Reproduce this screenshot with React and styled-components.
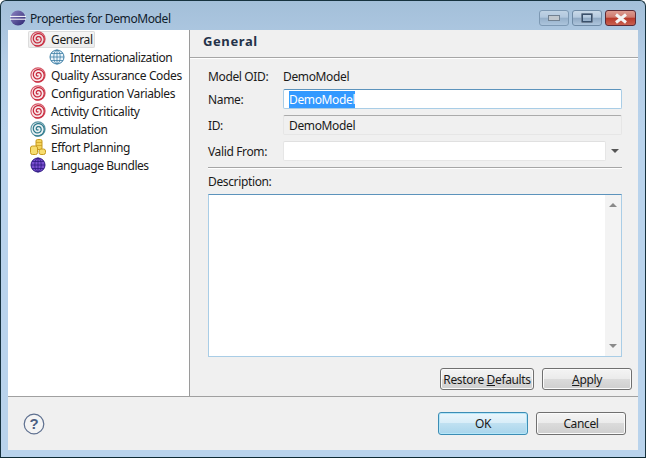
import styled, { createGlobalStyle } from "styled-components"

const Global = createGlobalStyle`
  html, body { margin: 0; padding: 0; background: #fff; }
  * { box-sizing: border-box; }
`

const Window = styled.div`
  width: 646px;
  height: 458px;
  display: flex;
  flex-direction: column;
  padding: 0 7px 7px;
  border: 1px solid #16323f;
  border-bottom-color: #0e2a33;
  border-radius: 6px 6px 0 0;
  background: linear-gradient(180deg, #a3bfd9 0, #b4cde6 60px, #b9d3ec 130px, #b9d3ec 100%);
  font-family: "Noto Sans", "Open Sans", sans-serif;
  font-size: 12px;
  color: #1a1a1a;
`

const TitleBar = styled.div`
  height: 29px;
  flex: none;
  display: flex;
  align-items: center;
  padding: 5px 2px 0 2px;
  gap: 4px;
`

const TitleText = styled.div`
  flex: 1;
  color: #10202c;
  letter-spacing: -0.4px;
`

const Controls = styled.div`
  display: flex;
  gap: 3px;
`

const Control = styled.div`
  width: ${(p) => (p.$close ? 31 : 30)}px;
  height: 16px;
  border: 1px solid ${(p) => (p.$close ? "#5c2a35" : "#6f8ba6")};
  border-radius: 3px;
  display: flex;
  align-items: center;
  justify-content: center;
  opacity: ${(p) => (p.$dim ? 0.75 : 1)};
  background: ${(p) =>
    p.$close
      ? "linear-gradient(180deg, #dc9a90 0, #cf7a6e 45%, #b8392a 50%, #c8604f 100%)"
      : "linear-gradient(180deg, #c9d9e8 0, #b5cadf 45%, #8fa9c4 50%, #aec5dc 100%)"};
`

const Dialog = styled.div`
  flex: 1;
  display: flex;
  flex-direction: column;
  background: #f0f0f0;
  min-height: 0;
`

const Main = styled.div`
  height: 367px;
  flex: none;
  display: flex;
  border-bottom: 1px solid #a0a0a0;
`

const Tree = styled.div`
  width: 182px;
  flex: none;
  background: #fff;
  border-right: 1px solid #9a9a9a;
`

const TreeRow = styled.div`
  height: 18px;
  display: flex;
  align-items: center;
  padding-left: ${(p) => (p.$child ? 41 : 22)}px;
`

const TreeLabel = styled.span`
  display: flex;
  align-items: center;
  gap: 5px;
  height: 17px;
  padding-right: 2px;
  border-radius: 2px;
  white-space: nowrap;
  letter-spacing: ${(p) => (p.$tight ? -0.45 : -0.36)}px;
  ${(p) =>
    p.$selected &&
    `
    margin-left: -2px;
    padding-left: 2px;
    background: linear-gradient(180deg, #f6f6f6, #ececec);
    box-shadow: inset 0 0 0 1px #dcdcdc;
  `}
`

const Panel = styled.div`
  flex: 1;
  display: flex;
  flex-direction: column;
  min-width: 0;
`

const PanelHeader = styled.div`
  height: 28px;
  flex: none;
  padding: 2px 0 0 13px;
  border-bottom: 1px solid #a6a6a6;
  box-shadow: 0 1px 0 #fff;
  font-weight: 700;
  font-size: 13px;
  letter-spacing: 0.6px;
  color: #24324a;
`

const Form = styled.div`
  flex: 1;
  display: flex;
  flex-direction: column;
  padding: 8px 16px 0 18px;
  min-height: 0;
`

const FieldRow = styled.div`
  display: grid;
  grid-template-columns: 75px 1fr;
  align-items: center;
  height: 20px;
  margin-bottom: ${(p) => p.$mb || 0}px;
  letter-spacing: -0.36px;
`

const Input = styled.div`
  height: 20px;
  display: flex;
  align-items: center;
  padding-left: 5px;
  background: ${(p) => (p.$disabled ? "#f0f0f0" : "#fff")};
  border: 1px solid ${(p) => (p.$focus ? "#a9cde6" : "#e6e6e6")};
  border-top-color: ${(p) => (p.$focus ? "#5c93bc" : p.$disabled ? "#ababab" : "#e0e0e0")};
  border-radius: 2px;
`

const Selected = styled.span`
  background: #3399ff;
  color: #fff;
`

const DateCell = styled.div`
  display: grid;
  grid-template-columns: 1fr 15px;
  gap: 1px;
`

const ArrowCell = styled.div`
  display: flex;
  align-items: center;
  justify-content: center;
`

const Arrow = styled.div`
  width: 0;
  height: 0;
  border-left: 4px solid transparent;
  border-right: 4px solid transparent;
  border-${(p) => (p.$up ? "bottom" : "top")}: 4px solid ${(p) => p.$color || "#555"};
`

const Separator = styled.div`
  height: 2px;
  margin: 6px 0;
  background: #a6a6a6;
  border-bottom: 1px solid #fff;
`

const DescriptionLabel = styled.div`
  height: 19px;
  line-height: 14px;
  letter-spacing: -0.36px;
`

const TextArea = styled.div`
  height: 163px;
  flex: none;
  background: #fff;
  border: 1px solid #a9cde6;
  border-top-color: #5c93bc;
  display: flex;
  justify-content: flex-end;
`

const ScrollBar = styled.div`
  width: 16px;
  background: #f3f3f3;
  display: flex;
  flex-direction: column;
  justify-content: space-between;
  align-items: center;
  padding: 8px 0;
`

const PanelButtons = styled.div`
  display: flex;
  justify-content: flex-end;
  gap: 8px;
  margin: 11px -10px 0 0;
`

const Button = styled.div`
  width: ${(p) => p.$w || 90}px;
  height: ${(p) => p.$h || 22}px;
  display: flex;
  align-items: center;
  justify-content: center;
  border: 1px solid ${(p) => (p.$default ? "#3c8db5" : "#707070")};
  border-radius: 3px;
  letter-spacing: -0.36px;
  box-shadow: inset 0 0 0 1px ${(p) => (p.$default ? "#b5e6f8" : "#fbfbfb")};
  background: ${(p) =>
    p.$default
      ? "linear-gradient(180deg, #ebf6fc 0, #d8edf8 48%, #bfe0f1 50%, #a9d5ec 100%)"
      : "linear-gradient(180deg, #f4f4f4 0, #ebebeb 48%, #dbdbdb 50%, #cfcfcf 100%)"};
`

const Footer = styled.div`
  flex: 1;
  display: flex;
  align-items: center;
  justify-content: space-between;
  padding: 0 12px 0 15px;
`

const FooterButtons = styled.div`
  display: flex;
  gap: 8px;
`

// archimedean spiral used by the model icons
const spiral = (() => {
  const end = 4.4 * Math.PI
  let d = ""
  for (let a = 0; a <= end; a += 0.25) {
    const r = 0.6 + (a / end) * 6.6
    const x = 8 + r * Math.cos(a + 0.9)
    const y = 8 + r * Math.sin(a + 0.9)
    d += `${a === 0 ? "M" : "L"}${x.toFixed(2)} ${y.toFixed(2)}`
  }
  return d
})()

const SpiralIcon = ({ color = "#c8283c" }) => (
  <svg width="16" height="16" viewBox="0 0 16 16">
    <circle cx="8" cy="8" r="7.6" fill={color} opacity="0.1" />
    <circle cx="8" cy="8" r="7.1" fill="none" stroke={color} strokeWidth="1.1" opacity="0.75" />
    <path d={spiral} fill="none" stroke={color} strokeWidth="1.25" />
  </svg>
)

const GlobeIcon = ({ fill = "#eaf4fb", line = "#3d7fa6", width = 1 }) => (
  <svg width="16" height="16" viewBox="0 0 16 16">
    <circle cx="8" cy="8" r="7" fill={fill} stroke={line} strokeWidth={width} />
    <ellipse cx="8" cy="8" rx="3.2" ry="7" fill="none" stroke={line} strokeWidth="0.8" />
    <path d="M8 1v14M1 8h14M2 4.5h12M2 11.5h12" stroke={line} strokeWidth="0.8" />
  </svg>
)

const CoinsIcon = () => (
  <svg width="16" height="16" viewBox="0 0 16 16">
    <rect x="6" y="0.5" width="6" height="10" rx="1.5" fill="#f3d25a" stroke="#c79a1e" />
    <path d="M6 3.5h6M6 6.5h6" stroke="#c79a1e" strokeWidth="0.7" />
    <rect x="0.5" y="7" width="7" height="8.5" rx="2" fill="#f7dd70" stroke="#c79a1e" />
    <rect x="9" y="10" width="6.5" height="5.5" rx="2" fill="#f7dd70" stroke="#c79a1e" />
  </svg>
)

const EclipseIcon = () => (
  <svg width="16" height="16" viewBox="0 0 16 16">
    <defs>
      <linearGradient id="ecl" x1="0" y1="0" x2="1" y2="1">
        <stop offset="0" stopColor="#8f86c4" />
        <stop offset="1" stopColor="#2a2470" />
      </linearGradient>
    </defs>
    <circle cx="8" cy="8" r="7.5" fill="url(#ecl)" />
    <path d="M0 6.4h16M0 9.2h16" stroke="#fff" strokeWidth="1" />
  </svg>
)

const HelpIcon = () => (
  <svg width="22" height="22" viewBox="0 0 22 22">
    <circle cx="11" cy="11" r="9.8" fill="#f4f4f4" stroke="#5d6f8f" strokeWidth="1.2" />
    <text x="11" y="16" textAnchor="middle" fontFamily="Liberation Sans, sans-serif" fontWeight="700" fontSize="15" fill="#4e5f82">?</text>
  </svg>
)

const items = [
  { label: "General", icon: <SpiralIcon />, selected: true },
  { label: "Internationalization", icon: <GlobeIcon />, child: true, tight: true },
  { label: "Quality Assurance Codes", icon: <SpiralIcon /> },
  { label: "Configuration Variables", icon: <SpiralIcon /> },
  { label: "Activity Criticality", icon: <SpiralIcon /> },
  { label: "Simulation", icon: <SpiralIcon color="#2f7a8c" /> },
  { label: "Effort Planning", icon: <CoinsIcon /> },
  { label: "Language Bundles", icon: <GlobeIcon fill="#7a4fd0" line="#2d1a80" />, tight: true },
]

export default function App() {
  return (
    <Window>
      <Global />
      <TitleBar>
        <EclipseIcon />
        <TitleText>Properties for DemoModel</TitleText>
        <Controls>
          <Control $dim>
            <svg width="12" height="6"><rect x="0.5" y="0.5" width="11" height="5" fill="#c9c9c9" stroke="#5f6b78" /></svg>
          </Control>
          <Control>
            <svg width="12" height="10"><rect x="1" y="1" width="10" height="8" fill="none" stroke="#39506b" strokeWidth="2" /><rect x="0" y="0" width="12" height="10" fill="none" stroke="#e6eef6" strokeWidth="0.6" /></svg>
          </Control>
          <Control $close>
            <svg width="16" height="11"><path d="M3 1.5L13 9.5M13 1.5L3 9.5" stroke="#f4f4f4" strokeWidth="3" /></svg>
          </Control>
        </Controls>
      </TitleBar>
      <Dialog>
        <Main>
          <Tree>
            {items.map((item) => (
              <TreeRow key={item.label} $child={item.child}>
                <TreeLabel $selected={item.selected} $tight={item.tight}>
                  {item.icon}
                  {item.label}
                </TreeLabel>
              </TreeRow>
            ))}
          </Tree>
          <Panel>
            <PanelHeader>General</PanelHeader>
            <Form>
              <FieldRow $mb={3}>
                <span>Model OID:</span>
                <span>DemoModel</span>
              </FieldRow>
              <FieldRow $mb={6}>
                <span>Name:</span>
                <Input $focus><Selected>DemoModel</Selected></Input>
              </FieldRow>
              <FieldRow $mb={6}>
                <span>ID:</span>
                <Input $disabled>DemoModel</Input>
              </FieldRow>
              <FieldRow>
                <span>Valid From:</span>
                <DateCell>
                  <Input />
                  <ArrowCell><Arrow /></ArrowCell>
                </DateCell>
              </FieldRow>
              <Separator />
              <DescriptionLabel>Description:</DescriptionLabel>
              <TextArea>
                <ScrollBar>
                  <Arrow $up $color="#8a8a8a" />
                  <Arrow $color="#8a8a8a" />
                </ScrollBar>
              </TextArea>
              <PanelButtons>
                <Button $w={94}><span>Restore <u>D</u>efaults</span></Button>
                <Button><span><u>A</u>pply</span></Button>
              </PanelButtons>
            </Form>
          </Panel>
        </Main>
        <Footer>
          <HelpIcon />
          <FooterButtons>
            <Button $default $h={23}>OK</Button>
            <Button $h={23}>Cancel</Button>
          </FooterButtons>
        </Footer>
      </Dialog>
    </Window>
  )
}
